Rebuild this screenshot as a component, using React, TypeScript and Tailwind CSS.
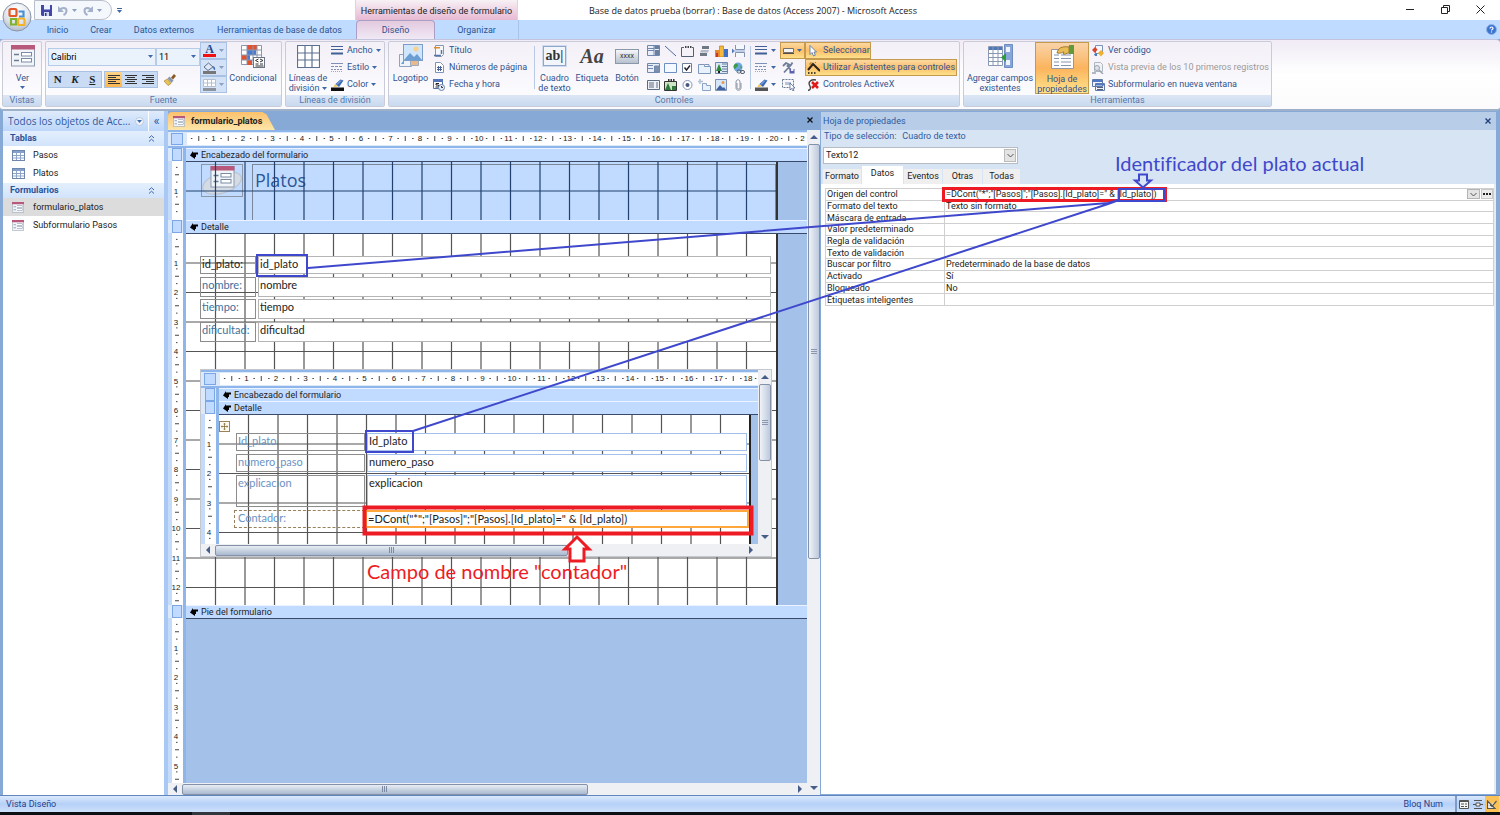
import type { ReactNode } from "react"
import clsx from "clsx"

const PITCH = 29.5

type Kids = { children?: ReactNode }

const Icon = ({ w = 14, h = 14, box, children }: Kids & { w?: number; h?: number; box?: string }) => (
	<svg width={w} height={h} viewBox={box ?? `0 0 ${w} ${h}`} className="shrink-0" aria-hidden="true">
		{children}
	</svg>
)

const Caret = ({ light }: { light?: boolean }) => (
	<svg width="5" height="3" viewBox="0 0 5 3" className="shrink-0" aria-hidden="true">
		<path d="M0 0h5L2.5 3z" fill={light ? "#8aa0c0" : "#3f68a8"} />
	</svg>
)

/* ---------- icons ---------- */

const FormIcon = ({ w, h }: { w: number; h: number }) => (
	<Icon w={w} h={h} box="0 0 24 22">
		<rect x=".5" y=".5" width="23" height="20.5" fill="#f1f4f8" stroke="#8d9bae" />
		<rect x="0" y="0" width="24" height="4.5" fill="#b8587a" />
		<path d="M3 9.500h5M3 15.500h5" stroke="#6c7c92" strokeWidth="1.300" />
		<rect x="10.5" y="7.5" width="10" height="3.5" fill="#fff" stroke="#7b8ba3" />
		<rect x="10.5" y="13.5" width="10" height="3.5" fill="#fff" stroke="#7b8ba3" />
	</Icon>
)

const TableIcon = () => (
	<Icon w={13} h={11}>
		<rect x=".5" y=".5" width="12" height="10" fill="#fff" stroke="#6f87ad" />
		<path d="M1 1h11v2H1z" fill="#7fa0d4" />
		<path d="M1 5.500h11M1 8h11M4.500 1v9M8.500 1v9" stroke="#8fa5c8" />
	</Icon>
)

const OfficeButton = () => (
	<button className="absolute left-[2px] top-[2px] z-10 size-[30px] rounded-full" aria-label="Botón de Office">
		<svg width="30" height="30" viewBox="0 0 30 30" aria-hidden="true">
			<defs>
				<radialGradient id="orb" cx=".5" cy=".25" r=".8">
					<stop offset="0" stopColor="#ffffff" />
					<stop offset=".6" stopColor="#dfe3ea" />
					<stop offset="1" stopColor="#a9b3c4" />
				</radialGradient>
			</defs>
			<circle cx="15" cy="15" r="14" fill="url(#orb)" stroke="#8a95a9" />
			<g fill="none" strokeWidth="2.200">
				<rect x="7.5" y="7" width="7" height="7" rx="1.5" stroke="#e2592a" />
				<path d="M16.500 9.500h5v5H17" stroke="#4a8fd6" />
				<path d="M9 17h5v5.500H9z" stroke="#7fb32f" />
				<rect x="16" y="16.5" width="6.5" height="6.5" rx="1.5" stroke="#f2b229" />
			</g>
		</svg>
	</button>
)

const SaveIcon = () => (
	<Icon w={11} h={11}>
		<path d="M0 0h11v11H1L0 10z" fill="#4146a8" />
		<path d="M3 0h6v4.500H3z" fill="#eef2ff" />
		<path d="M3 7h5v4H3z" fill="#cfd6ee" />
		<path d="M4 8h1.500v3H4z" fill="#33378c" />
	</Icon>
)

const UndoIcon = ({ flip }: { flip?: boolean }) => (
	<Icon w={10} h={11}>
		<g transform={flip ? "matrix(-1 0 0 1 10 0)" : undefined}>
			<path d="M2 5.500c1-3.500 6.500-3.500 6.500 0 0 2-1 3.500-3 4.500" fill="none" stroke="#a3b1ca" strokeWidth="2" />
			<path d="M0 1v6h6z" fill="#a3b1ca" />
		</g>
	</Icon>
)

const LineWeights = () => (
	<Icon w={12} h={9}>
		<path d="M0 .5h12M0 3.500h12" stroke="#3f5f95" />
		<path d="M0 7.500h12" stroke="#3f5f95" strokeWidth="2" />
	</Icon>
)

const LineStyles = () => (
	<Icon w={12} h={9}>
		<path d="M0 .5h12" stroke="#7d92b6" />
		<path d="M0 3.500h12" stroke="#7d92b6" strokeDasharray="3 1" />
		<path d="M0 6.500h12" stroke="#7d92b6" strokeDasharray="2 1" />
		<path d="M0 8.500h12" stroke="#9badc9" strokeDasharray="1 1" />
	</Icon>
)

const PenColor = ({ color = "#111" }: { color?: string }) => (
	<Icon w={13} h={12}>
		<path d="M0 8.500h13V12H0z" fill={color} />
		<path d="M2.500 8 4 5l3 2.500z" fill="#f0c54a" />
		<path d="m4.500 5 5-4.500 3 1-4.500 6.500z" fill="#3b69b5" />
		<path d="m6 5.500 4-4" stroke="#a8c6f0" />
	</Icon>
)

const GridBig = () => (
	<Icon w={23} h={23}>
		<path d="M.5 .5h22v22H.5zM.5 8h22M.5 15h22M8 .5v22M15 .5v22" fill="#fff" stroke="#5c7091" strokeWidth="1.200" />
	</Icon>
)

const ConditionalIcon = () => (
	<Icon w={24} h={23}>
		<path d="M.5 .5h20v19H.5z" fill="#fff" stroke="#8a97ad" />
		<path d="M6 0h6v5H6zM6 15h5v5H6zM12 0h4v5h-4zM1 10h5v5H1z" fill="#e2522e" />
		<path d="M6 5h9v5H6zM6 10h3v5H6z" fill="#4a7bd0" />
		<path d="M.5 5h20M.5 10h20M.5 15h20M6 .5v19M12 .5v19M16 .5v19" stroke="#8a97ad" />
		<rect x="12.5" y="12.5" width="11" height="10" fill="#fff" stroke="#6a7688" />
		<path d="m17.500 14-3 1.500 3 1.500M14.500 19h3M19 14l3 1.500-3 1.500M19 19h3M14.500 21h8" fill="none" stroke="#333" />
	</Icon>
)

const BrushIcon = () => (
	<Icon w={13} h={12}>
		<path d="m1 7 4 4.500 3-2L4.500 5z" fill="#e9c25a" stroke="#a07c25" strokeWidth=".6" />
		<path d="m4.500 4.500 2-2 4 4-2 2.500z" fill="#8b96a8" />
		<path d="m8 3.500 3-3.500 2 2-3 3.500z" fill="#8a5a24" />
	</Icon>
)

const FillIcon = () => (
	<Icon w={13} h={12}>
		<path d="M0 9h13v3H0z" fill="#777" />
		<path d="m1 5 4.500-4L10 5 5 8.500z" fill="#dfe8f5" stroke="#5c7091" />
		<path d="M10 4c2 1 2.500 2.500 2 4-1.500 0-2-2-2-4z" fill="#3b69b5" />
	</Icon>
)

const BordersIcon = () => (
	<Icon w={13} h={12}>
		<path d="M.5 .5h12v7H.5zM.5 4h12M4.500 .5v7M8.500 .5v7" fill="#fff" stroke="#b4c0d2" />
		<path d="M0 9h13v3H0z" fill="#8d949e" />
	</Icon>
)

const LogoIcon = () => (
	<Icon w={24} h={24}>
		<path d="M.5 10.500h12v12H.5z" fill="#eef3fa" stroke="#8fa3c0" />
		<path d="M2 20h3v-4z" fill="#6b9fd4" />
		<path d="M11.500 16.500h8v5h-8z" fill="#e7b98b" stroke="#9daac0" />
		<rect x="4.500" y=".5" width="19" height="16" fill="#cfe5fb" stroke="#7d9cc6" />
		<circle cx="17" cy="5" r="2.500" fill="#fbd08a" />
		<path d="m5 16 6-7 4 4 3-3 5 6z" fill="#6b9fd4" />
	</Icon>
)

const TitleIcon = () => (
	<Icon w={10} h={12}>
		<path d="M1.500 .5h8v9l-2 2h-6z" fill="#f5f8fc" stroke="#8898b2" />
		<path d="M0 2h6v1.500H0z" fill="#e08a2b" />
		<path d="M0 10.500h7M7.500 9V5" stroke="#5874a4" strokeWidth="1.500" />
	</Icon>
)

const PageNumIcon = () => (
	<Icon w={9} h={11}>
		<path d="M.5 .5h5l3 3v7h-8z" fill="#fff" stroke="#7d92b6" />
		<path d="M2 5.500h5M2 7.500h5M3.500 4v5M5.500 4v5" stroke="#4a6496" />
	</Icon>
)

const DateIcon = () => (
	<Icon w={12} h={12}>
		<path d="M.5 1.500h9v8h-9z" fill="#fff" stroke="#5470a0" />
		<path d="M0 0h10v3H0z" fill="#5276b8" />
		<path d="M6 4.500H3v1.500h2.500v2H2.500" fill="none" stroke="#222" />
		<circle cx="8.500" cy="8.500" r="3" fill="#e6eefb" stroke="#6b83ad" />
		<path d="M8.500 7v1.500H10" fill="none" stroke="#333" />
	</Icon>
)

const TextBoxIcon = () => (
	<div className="flex h-5 w-[23px] items-center justify-center border border-[#8fa6c8] bg-[#f2f6fc] font-[family-name:'Liberation_Serif',serif] text-[14px] font-bold leading-none text-[#333] outline outline-1 outline-[#cfdcee]">
		ab|
	</div>
)

const LabelIcon = () => (
	<div className="flex h-5 items-center font-[family-name:'Liberation_Serif',serif] text-[20px] font-bold italic leading-none text-[#444]">
		Aa
	</div>
)

const ButtonIcon = () => (
	<div className="flex h-[15px] w-6 items-center justify-center border border-[#8c98aa] bg-linear-to-b from-[#f4f6f9] to-[#b7c1cf] text-[7px] leading-none text-[#333]">
		xxxx
	</div>
)

const toolIcons: { name: string; art: ReactNode }[] = [
	{
		name: "Cuadro combinado",
		art: (
			<>
				<path d="M.5 .5h12v10H.5z" fill="#e8effa" stroke="#7088ae" />
				<path d="M7 1v10M1 3.500h6M1 5.500h6" stroke="#7088ae" />
				<path d="M7.500 1h5v3h-5zM8 5h4v5H8z" fill="#6a7f9f" />
			</>
		),
	},
	{ name: "Línea", art: <path d="m1 1 11 10" stroke="#4a6aa5" /> },
	{
		name: "Grupo de opciones",
		art: (
			<>
				<path d="M3 2.500H.5v9h12v-9H11" fill="none" stroke="#555f70" />
				<path d="M4 1h1.500v2H4zM6.500 1H8v2H6.500zM9 1h1.500v2H9z" fill="#444" />
			</>
		),
	},
	{
		name: "Botón de alternar",
		art: (
			<>
				<path d="M4 1h7v3H4zM2 8h7v3H2z" fill="#6f7885" />
				<path d="M2 7.500h8L11 5H3z" fill="#b4bbc6" />
			</>
		),
	},
	{
		name: "Gráfico",
		art: (
			<>
				<path d="M0 5h4v7H0z" fill="#e8862b" />
				<path d="M4.500 1h4v11h-4z" fill="#f4b93c" stroke="#b06c17" strokeWidth=".6" />
				<path d="M9 4h4v8H9z" fill="#3f6fc5" />
				<path d="M1 8h2v4H1z" fill="#c8372b" />
			</>
		),
	},
	{
		name: "Insertar salto de página",
		art: (
			<>
				<path d="M3.500 0v4.500h9V0M3.500 12V7.500h9V12" fill="#f4f7fb" stroke="#8193b0" />
				<path d="M0 4v4l2.500-2zM3 6h10" fill="#4f79bd" stroke="#4f79bd" strokeWidth=".6" />
			</>
		),
	},
	{
		name: "Cuadro de lista",
		art: (
			<>
				<path d="M.5 1.500h12v9H.5z" fill="#e8effa" stroke="#7088ae" />
				<path d="M7.500 4h5v6h-5zM1 3.500h5M1 6.500h5" fill="#7d90ad" stroke="#7088ae" />
			</>
		),
	},
	{ name: "Rectángulo", art: <path d="M.5 1.500h12v9H.5z" fill="#f3f9ff" stroke="#6c8fc4" /> },
	{
		name: "Casilla",
		art: (
			<>
				<path d="M1.500 1.500h9v9h-9z" fill="#fff" stroke="#6d7e99" />
				<path d="m3.500 5.500 2 2.500L9 3.500" fill="none" stroke="#223" strokeWidth="1.400" />
			</>
		),
	},
	{ name: "Control de pestaña", art: <path d="M.5 2.500h6v2h6v7H.5zM7 2.500h4v2" fill="#e9f1fb" stroke="#7f97bd" /> },
	{
		name: "Subformulario",
		art: (
			<>
				<path d="M.5 .5h12v11H.5z" fill="#dce8f7" stroke="#7088ae" />
				<path d="M7 2h5M7 4.500h5M7 7h5M7 9.500h5" stroke="#6a7f9f" />
				<path d="m1 9 3-7 3 7z" fill="#2f8a3c" />
				<path d="M3 9h2v2H3z" fill="#1d1d1d" />
			</>
		),
	},
	{
		name: "Hipervínculo",
		art: (
			<>
				<circle cx="6" cy="5" r="4.500" fill="#6da7df" />
				<path d="M3 2c3-1 4 2 2 3S3 8 2 6 2 3 3 2zM8 4l2 1-1 2z" fill="#3d9a45" />
				<rect x="5" y="8" width="4" height="3" rx="1.500" fill="none" stroke="#555f70" />
				<rect x="8.500" y="8.500" width="4" height="3" rx="1.500" fill="none" stroke="#555f70" />
			</>
		),
	},
	{
		name: "Lista",
		art: (
			<>
				<path d="M.5 1.500h12v9H.5z" fill="#eef1f6" stroke="#5d6b82" />
				<path d="M2 4h5M2 6h5M2 8h5M10 3v6" stroke="#5d6b82" />
			</>
		),
	},
	{
		name: "Marco de objeto",
		art: (
			<>
				<path d="M.5 2.500h12v9H.5z" fill="#cde5c5" stroke="#333" />
				<path d="m1 11 3-7 3 7zM8 7h4v4H8z" fill="#2f7a3c" />
				<path d="M4 0h1.500v2H4zM6.500 0H8v2H6.500zM9 0h1.500v2H9z" fill="#333" />
			</>
		),
	},
	{
		name: "Botón de opción",
		art: (
			<>
				<circle cx="6.500" cy="6" r="4.500" fill="#fff" stroke="#8495b2" />
				<circle cx="6.500" cy="6" r="2" fill="#46587a" />
			</>
		),
	},
	{
		name: "Página",
		art: (
			<>
				<path d="M4.500 4.500h4v2h4v5h-8z" fill="#e9f1fb" stroke="#8ca3c8" />
				<path d="M2 0v5M0 2.500h5" stroke="#b3c0d4" strokeWidth="1.500" />
			</>
		),
	},
	{
		name: "Imagen",
		art: (
			<>
				<path d="M.5 .5h11v11H.5z" fill="#d5e6f9" stroke="#7d92b6" />
				<path d="m1 11 4-5 3 3 1-1 2 3z" fill="#3e62a0" />
				<circle cx="8" cy="3.500" r="1.500" fill="#e79a53" />
			</>
		),
	},
	{
		name: "Datos adjuntos",
		art: <path d="M5 4v4.500c0 2 3 2 3 0V3c0-3-4-3-4 0v6c0 3 5 3 5 0V4" fill="none" stroke="#7f8a99" strokeWidth=".9" />,
	},
]

const SpecialIcon = () => (
	<Icon w={11} h={6}>
		<path d="M.5 .5h10v4H.5z" fill="#f4f4f4" stroke="#77716a" />
		<path d="M0 5.500h11" stroke="#57504a" />
	</Icon>
)

const ToolsIcon = () => (
	<Icon w={13} h={12}>
		<path d="M1 4 4 1l3 1.500L5.500 4 11 10M10.500 .5 9 3 2 10.500" fill="none" stroke="#6f7e99" strokeWidth="1.800" />
		<path d="M7.500 7h5v4.500h-5z" fill="#5a62ab" />
		<path d="M9 7h2.500v2H9z" fill="#eef" />
	</Icon>
)

const MarqueeIcon = () => (
	<Icon w={13} h={12}>
		<path d="M.5 .5h11v8H.5z" fill="none" stroke="#6b7a93" strokeDasharray="2 1" />
		<path d="M3 3h6v3H3z" fill="#b9c4d6" />
		<path d="M8 4v7l1.500-1.500L11 12l1-.5-1.200-2.500H13z" fill="#fff" stroke="#3f5788" strokeWidth=".7" />
	</Icon>
)

const CursorIcon = () => (
	<Icon w={10} h={12}>
		<path d="M2 .5v9L4 7.500 5.500 11l1.800-.8L6 7h2.500z" fill="#fff" stroke="#4c6c9f" strokeWidth=".8" />
	</Icon>
)

const WandIcon = () => (
	<Icon w={13} h={12}>
		<path d="M1 8 6 2l7 7" fill="none" stroke="#2c2419" strokeWidth="2" />
		<path d="M4 0v2M2 2h2M8 1l1-1" stroke="#b87412" />
		<path d="M1 11h1.500M4 11h1.500M7 11h1.500" stroke="#111" strokeWidth="1.500" />
	</Icon>
)

const ActiveXIcon = () => (
	<Icon w={13} h={12}>
		<path d="M9 1C4 0 1 3 2.500 6S4 11 1 11.500" fill="none" stroke="#444" strokeWidth="1.400" />
		<path d="m5 3 6 6M11 3 5 9" stroke="#e01919" strokeWidth="2.500" />
	</Icon>
)

const AddFieldsIcon = () => (
	<Icon w={25} h={24}>
		<path d="M.5 2.500h14v19H.5z" fill="#fff" stroke="#8a99b3" />
		<path d="M1 3h13v3H1z" fill="#4f78b8" />
		<path d="M.5 9.500h14M.5 13.500h14M.5 17.500h14M5 3v18M10 3v18" stroke="#8a99b3" />
		<path d="M16.500 .5h8v23h-8z" fill="#86a6dc" stroke="#6f8cbe" />
		<path d="M18 3h4v5h-4zM18 16h4v5h-4z" fill="#f1f5fb" />
		<path d="M13 13.500 18 9v9z" fill="#2f9a3a" />
	</Icon>
)

const PropertyIcon = () => (
	<Icon w={25} h={24}>
		<path d="M1.500 4.500h22v19h-22z" fill="#fdfdfd" stroke="#9098a5" />
		<path d="M4 10h5M4 13.500h5M4 17h5M4 20.500h5M11 10h10M11 13.500h10M11 17h10M11 20.500h10" stroke="#8796ad" />
		<path d="M7 8c1-5 5-7 12-6v6c-3 0-4 2-6 1l1-2c-2 0-3 2-7 1z" fill="#e8bd55" stroke="#8c6420" strokeWidth=".8" />
		<path d="M19 0h5v9h-5z" fill="#5f9a3c" />
	</Icon>
)

const CodeIcon = () => (
	<Icon w={12} h={12}>
		<path d="M3.500 .5h7v8h-7z" fill="#f5f7fb" stroke="#7d92b6" />
		<path d="m0 5 3-3 2.500 2.500L3 8z" fill="#d8442c" />
		<path d="m6 8 3-3 3 3-3 3.500z" fill="#eeb02e" />
		<path d="m2 9 3-1v3H3z" fill="#4a78c8" />
	</Icon>
)

const PreviewIcon = () => (
	<Icon w={12} h={12}>
		<path d="M2.500 .5h6l2 2v7h-8z" fill="#f0f2f5" stroke="#b0b6c0" />
		<circle cx="5" cy="6" r="2.500" fill="#dfe3e9" stroke="#9aa3b0" />
		<path d="m7 8 4 4M0 11h4" stroke="#9aa3b0" strokeWidth="1.500" />
	</Icon>
)

const SubformIcon = () => (
	<Icon w={13} h={12}>
		<path d="M.5 .5h10v7H.5zM3.500 4.500h9v7h-9z" fill="#eef3fb" stroke="#5f7aa8" />
		<path d="M1 1h9v2H1zM4 5h8v1.500H4z" fill="#4f78c4" />
		<path d="M5 8.500h6M5 10.500h6" stroke="#54617a" />
	</Icon>
)

/* ---------- ribbon ---------- */

const Group = ({ label, className, children }: Kids & { label: string; className: string }) => (
	<div
		role="group"
		aria-label={label}
		className={clsx(
			"flex h-[66px] shrink-0 flex-col overflow-hidden rounded-xs border border-[#c9ccd8] bg-linear-to-b from-[#f3f0f7] to-[#fdfdff]",
			className,
		)}
	>
		<div className="flex h-[53px] items-start pl-px">{children}</div>
		<div className="flex-1 bg-linear-to-b from-[#dce7f5] to-[#c9d9ef] text-center leading-[11px] text-[#5577a9]">{label}</div>
	</div>
)

const BigButton = ({ icon, className, children }: Kids & { icon: ReactNode; className: string }) => (
	<button className={clsx("flex h-[52px] shrink-0 flex-col items-center pt-[2px] leading-[10px]", className)}>
		<span className="mb-[5px] flex h-6 items-center">{icon}</span>
		{children}
	</button>
)

const SmallButton = ({ icon, className, children }: Kids & { icon: ReactNode; className?: string }) => (
	<button className={clsx("flex h-[17px] items-center gap-[3px] whitespace-nowrap text-left", className)}>
		<span className="flex w-[14px] justify-center">{icon}</span>
		{children}
	</button>
)

const Rule = () => <span className="mt-[4px] h-[43px] w-px shrink-0 bg-[#b7cbe6]" />

const Toggle = ({ label, on, children }: Kids & { label: string; on?: boolean }) => (
	<button
		aria-label={label}
		aria-pressed={on}
		className={clsx(
			"flex h-full flex-1 items-center justify-center",
			on ? "bg-linear-to-b from-[#fbd48b] to-[#fdb64e]" : "bg-[#c9dcf3]",
		)}
	>
		{children}
	</button>
)

const AlignIcon = ({ d }: { d: string }) => (
	<Icon w={12} h={10}>
		<path d={d} stroke="#333" />
	</Icon>
)

const hot = "border border-[#c59a4e] bg-linear-to-b from-[#fcd9a0] via-[#fbbf6a] to-[#fde08a]"

const Ribbon = () => (
	<div className="flex h-[72px] gap-[3px] overflow-hidden rounded-sm border-b-2 border-t border-b-[#9fb0c9] border-t-[#c3c3dc] bg-linear-to-b from-[#f0ebf5] via-white to-[#fbfbfd] pl-[2px] pt-px text-[#32548f]">
		<Group label="Vistas" className="w-[40px]">
			<BigButton className="w-[37px]" icon={<FormIcon w={24} h={22} />}>
				<span>Ver</span>
				<span className="mt-[3px]">
					<Caret />
				</span>
			</BigButton>
		</Group>

		<Group label="Fuente" className="w-[237px]">
			<div className="w-[153px] shrink-0 pl-px pt-[6px]">
				<div className="flex h-[18px]">
					<span className="relative flex w-[108px]">
						<select aria-label="Fuente" className="w-full appearance-none border border-[#b5cbe8] bg-[#eaf2fc] px-[2px] text-black">
							<option>Calibri</option>
						</select>
						<span className="pointer-events-none absolute right-[3px] top-[7px]">
							<Caret />
						</span>
					</span>
					<span className="relative flex w-[44px]">
						<select aria-label="Tamaño" className="w-full appearance-none border border-[#b5cbe8] bg-[#eaf2fc] px-[2px] text-black">
							<option>11</option>
						</select>
						<span className="pointer-events-none absolute right-[4px] top-[7px]">
							<Caret />
						</span>
					</span>
				</div>
				<div className="mt-[5px] flex h-[17px] font-[family-name:'Liberation_Serif',serif] text-[11px] font-bold text-[#222]">
					<div className="flex w-[54px] border border-[#a9c1e2]">
						<Toggle label="Negrita">N</Toggle>
						<Toggle label="Cursiva">
							<i>K</i>
						</Toggle>
						<Toggle label="Subrayado">
							<u>S</u>
						</Toggle>
					</div>
					<div className="ml-[2px] flex w-[54px] border border-[#a9c1e2]">
						<Toggle label="Alinear a la izquierda" on>
							<AlignIcon d="M0 .5h12M0 2.500h8M0 4.500h12M0 6.500h8M0 8.500h12" />
						</Toggle>
						<Toggle label="Centrar">
							<AlignIcon d="M0 .5h12M2 2.500h8M0 4.500h12M2 6.500h8M0 8.500h12" />
						</Toggle>
						<Toggle label="Alinear a la derecha">
							<AlignIcon d="M0 .5h12M4 2.500h8M0 4.500h12M4 6.500h8M0 8.500h12" />
						</Toggle>
					</div>
					<button className="ml-[5px]" aria-label="Copiar formato">
						<BrushIcon />
					</button>
				</div>
			</div>
			<div className="w-[27px] shrink-0">
				{[
					{
						name: "Color de fuente",
						art: (
							<span className="flex w-[13px] flex-col items-center border-b-[3px] border-[#f01010] font-[family-name:'Liberation_Serif',serif] text-[12px] font-bold leading-[10px] text-[#26468c]">
								A
							</span>
						),
					},
					{ name: "Color de relleno", art: <FillIcon /> },
					{ name: "Bordes", art: <BordersIcon /> },
				].map((b) => (
					<button
						key={b.name}
						aria-label={b.name}
						className="flex h-[17px] w-full items-center justify-between border border-[#a9c1e2] bg-[#d3e2f6] px-[2px]"
					>
						{b.art}
						<Caret light />
					</button>
				))}
			</div>
			<BigButton className="w-[52px]" icon={<ConditionalIcon />}>
				Condicional
			</BigButton>
		</Group>

		<Group label="Líneas de división" className="w-[100px]">
			<BigButton className="w-[42px]" icon={<GridBig />}>
				<span>Líneas de</span>
				<span className="flex items-center gap-[3px]">
					división <Caret />
				</span>
			</BigButton>
			<div className="pl-px">
				<SmallButton icon={<LineWeights />}>
					Ancho <Caret />
				</SmallButton>
				<SmallButton icon={<LineStyles />}>
					Estilo <Caret />
				</SmallButton>
				<SmallButton icon={<PenColor />}>
					Color <Caret />
				</SmallButton>
			</div>
		</Group>

		<Group label="Controles" className="w-[572px]">
			<BigButton className="w-[41px]" icon={<LogoIcon />}>
				Logotipo
			</BigButton>
			<div className="w-[103px] shrink-0 pl-px">
				<SmallButton icon={<TitleIcon />}>Título</SmallButton>
				<SmallButton icon={<PageNumIcon />}>Números de página</SmallButton>
				<SmallButton icon={<DateIcon />}>Fecha y hora</SmallButton>
			</div>
			<Rule />
			<BigButton className="w-[39px]" icon={<TextBoxIcon />}>
				<span>Cuadro</span>
				<span>de texto</span>
			</BigButton>
			<BigButton className="w-[36px]" icon={<LabelIcon />}>
				Etiqueta
			</BigButton>
			<BigButton className="w-[34px]" icon={<ButtonIcon />}>
				Botón
			</BigButton>
			<div className="grid w-[106px] shrink-0 grid-cols-6 pl-px pr-[3px]">
				{toolIcons.map((t) => (
					<button key={t.name} aria-label={t.name} className="flex h-[17px] items-center justify-center">
						<Icon w={13} h={12}>
							{t.art}
						</Icon>
					</button>
				))}
			</div>
			<Rule />
			<div className="w-[29px] shrink-0 pl-[3px]">
				<SmallButton icon={<LineWeights />}>
					<Caret />
				</SmallButton>
				<SmallButton icon={<LineStyles />}>
					<Caret />
				</SmallButton>
				<SmallButton icon={<PenColor color="#555" />}>
					<Caret />
				</SmallButton>
			</div>
			<div className="flex w-[25px] shrink-0 flex-col">
				<button aria-label="Efecto especial" className={clsx("flex h-[17px] items-center justify-between px-[2px]", hot)}>
					<SpecialIcon />
					<Caret />
				</button>
				<button aria-label="Predeterminados" className="flex h-[17px] items-center pl-[2px]">
					<ToolsIcon />
				</button>
				<button aria-label="Seleccionar todo" className="flex h-[17px] items-center pl-[2px]">
					<MarqueeIcon />
				</button>
			</div>
			<div className="flex shrink-0 flex-col items-start">
				<SmallButton icon={<CursorIcon />} className={clsx("w-[66px]", hot)}>
					Seleccionar
				</SmallButton>
				<SmallButton icon={<WandIcon />} className={clsx("w-[152px]", hot)}>
					Utilizar Asistentes para controles
				</SmallButton>
				<SmallButton icon={<ActiveXIcon />} className="pl-px">
					Controles ActiveX
				</SmallButton>
			</div>
		</Group>

		<Group label="Herramientas" className="w-[309px]">
			<BigButton className="w-[70px]" icon={<AddFieldsIcon />}>
				<span>Agregar campos</span>
				<span>existentes</span>
			</BigButton>
			<BigButton
				className="w-[54px] border border-[#c59a4e] bg-linear-to-b from-[#f9d3a6] via-[#fbb45c] to-[#ffe38c]"
				icon={<PropertyIcon />}
			>
				<span>Hoja de</span>
				<span>propiedades</span>
			</BigButton>
			<div className="pl-[2px]">
				<SmallButton icon={<CodeIcon />}>Ver código</SmallButton>
				<SmallButton icon={<PreviewIcon />} className="text-[#9a9a9a]">
					Vista previa de los 10 primeros registros
				</SmallButton>
				<SmallButton icon={<SubformIcon />}>Subformulario en nueva ventana</SmallButton>
			</div>
		</Group>
	</div>
)

const TitleBar = () => (
	<header className="flex h-5 bg-white">
		<div className="ml-[34px] flex w-[78px] items-center gap-[6px] rounded-r-full border border-[#b9bfca] bg-[#f4f7fb] pl-[6px]">
			<button aria-label="Guardar">
				<SaveIcon />
			</button>
			<button aria-label="Deshacer" className="flex items-center gap-[4px]">
				<UndoIcon /> <Caret light />
			</button>
			<button aria-label="Rehacer" className="flex items-center gap-[4px]">
				<UndoIcon flip /> <Caret light />
			</button>
		</div>
		<button aria-label="Personalizar" className="ml-[5px] flex flex-col items-center justify-center gap-px">
			<span className="h-px w-[5px] bg-[#3f5f95]" />
			<Caret />
		</button>
		<div className="ml-[233px] w-[163px] border-x border-[#e6cfdf] bg-linear-to-b from-[#f7f1f5] to-[#e7b9d3] text-center leading-[22px]">
			Herramientas de diseño de formulario
		</div>
		<h1 className="flex-1 pl-[71px] font-[family-name:'Open_Sans','Noto_Sans',sans-serif] leading-[22px]">
			Base de datos prueba (borrar) : Base de datos (Access 2007) - Microsoft Access
		</h1>
		<div className="flex w-[108px] items-center justify-between pb-px pl-[14px] pr-[15px]">
			<button aria-label="Minimizar">
				<Icon w={8} h={9}>
					<path d="M0 4.500h8" stroke="#222" />
				</Icon>
			</button>
			<button aria-label="Restaurar">
				<Icon w={9} h={9}>
					<path d="M.5 2.500h6v6h-6zM2.500 2.500v-2h6v6h-2" fill="none" stroke="#222" />
				</Icon>
			</button>
			<button aria-label="Cerrar">
				<Icon w={9} h={9}>
					<path d="m.5 .5 8 8M8.500 .5l-8 8" stroke="#222" />
				</Icon>
			</button>
		</div>
	</header>
)

const Tabs = () => (
	<nav className="flex h-[19px] bg-[#bfdbff] pl-9 leading-[21px] text-[#2f538f]">
		<button className="w-[43px]">Inicio</button>
		<button className="w-[44px]">Crear</button>
		<button className="w-[82px]">Datos externos</button>
		<button className="w-[149px]">Herramientas de base de datos</button>
		<div className="ml-[2px] flex w-[163px] border-r border-[#a9c3e8]">
			<button className="w-[79px] rounded-t-sm border border-b-0 border-[#a99fc6] bg-linear-to-b from-[#e3c9de] to-[#f0e9f5] leading-[19px]">
				Diseño
			</button>
			<button className="flex-1">Organizar</button>
		</div>
		<button aria-label="Ayuda" className="ml-auto mr-[3px]">
			<svg width="11" height="11" viewBox="0 0 11 11" aria-hidden="true">
				<circle cx="5.500" cy="5.500" r="5" fill="#3c73cf" stroke="#8fb3ea" />
				<path d="M4 4.500c0-2 3-2 3 0 0 1-1.500 1-1.500 2M5.500 7.500v1" fill="none" stroke="#fff" strokeWidth="1.200" />
			</svg>
		</button>
	</nav>
)

/* ---------- navigation pane ---------- */

const NavGroup = ({ title, children }: Kids & { title: string }) => (
	<>
		<button className="flex h-[15px] w-full items-center justify-between border-b border-[#d3e4fa] bg-linear-to-b from-[#e4effd] to-[#d3e5fc] pl-[7px] pr-[10px] font-bold text-[#2b5397]">
			{title}
			<Icon w={5} h={7}>
				<path d="M0 3 2.500 .7 5 3M0 6.500l2.500-2.300L5 6.500" fill="none" stroke="#3f68a8" />
			</Icon>
		</button>
		<ul className="pb-px">{children}</ul>
	</>
)

const NavItem = ({ icon, active, children }: Kids & { icon: ReactNode; active?: boolean }) => (
	<li className={clsx("flex h-[18px] items-center gap-[8px] pl-[9px]", active && "bg-[#dcdcdc]")}>
		<span className="flex w-[13px]">{icon}</span>
		<a href="#" className="text-[#222]">
			{children}
		</a>
	</li>
)

const NavPane = () => (
	<aside className="flex w-[165px] shrink-0 flex-col border-r-4 border-[#a9c8f3] bg-white">
		<div className="flex h-5 items-center bg-linear-to-b from-[#dfebfb] to-[#bcd6fa] pl-[5px] text-[10px] text-[#33589c]">
			<h2 className="w-[127px] font-[family-name:'Open_Sans','Noto_Sans',sans-serif]">Todos los objetos de Acc...</h2>
			<button aria-label="Filtro" className="flex size-[9px] items-center justify-center rounded-full border border-[#b9c9e0] bg-[#eef3fa]">
				<Caret />
			</button>
			<button aria-label="Contraer" className="ml-[4px] h-full flex-1 border-l border-white pb-px text-[13px] leading-none">
				«
			</button>
		</div>
		<NavGroup title="Tablas">
			<NavItem icon={<TableIcon />}>Pasos</NavItem>
			<NavItem icon={<TableIcon />}>Platos</NavItem>
		</NavGroup>
		<NavGroup title="Formularios">
			<NavItem icon={<FormIcon w={12} h={11} />} active>
				formulario_platos
			</NavItem>
			<NavItem icon={<FormIcon w={12} h={11} />}>Subformulario Pasos</NavItem>
		</NavGroup>
	</aside>
)

/* ---------- form designer ---------- */

// quarter marks of a ruler, running on a little past the last number
const quarters = (count: number) => Array.from({ length: count * 4 + 3 }, (_, i) => i + 1)

const digits = "font-[family-name:'Liberation_Sans',sans-serif] text-[8px]"

const HRuler = ({ count, tail }: { count: number; tail?: string }) => (
	<svg width="100%" height="12" className={clsx("block bg-white", digits)} aria-hidden="true">
		{quarters(count).map((q) => {
			const x = (q * PITCH) / 4 - 3
			if (q % 4 === 0)
				return (
					<text key={q} x={x} y="8" textAnchor="middle" fill="#222">
						{q / 4}
					</text>
				)
			return q % 2 === 0 ? (
				<path key={q} d={`M${x} 3v5`} stroke="#444" />
			) : (
				<path key={q} d={`M${x - 0.5} 5.500h1.500`} stroke="#444" />
			)
		})}
		{tail && (
			<text x={(count + 1) * PITCH - 4} y="8" textAnchor="middle" fill="#222">
				{tail}
			</text>
		)}
	</svg>
)

const VRuler = ({ count }: { count: number }) => (
	<div className="w-[18px] shrink-0 overflow-hidden border-r-[3px] border-[#8fb6ea] bg-[#c5dbfa] pl-[4px]">
		<svg width="11" height="100%" className={clsx("block bg-white", digits)} aria-hidden="true">
			{quarters(count).map((q) => {
				const y = (q * PITCH) / 4
				if (q % 4 === 0)
					return (
						<text key={q} x="4" y={y + 3} textAnchor="middle" fill="#222">
							{q / 4}
						</text>
					)
				return q % 2 === 0 ? (
					<path key={q} d={`M3 ${y - 1}h4`} stroke="#444" />
				) : (
					<path key={q} d={`M4 ${y - 1}h1.500`} stroke="#444" />
				)
			})}
		</svg>
	</div>
)

const RulerRow = ({ count, tail }: { count: number; tail?: string }) => (
	<div className="flex h-[18px] border-y-2 border-[#8fb6ea] bg-[#dce9fb] pl-[3px]">
		<span className="mt-px size-3 border border-[#7ba7e6] bg-[#c1daff]" />
		<div className="ml-[4px] flex-1 overflow-hidden pt-px">
			<HRuler count={count} tail={tail} />
		</div>
	</div>
)

const Section = ({ title, count = 0, className, children }: Kids & { title: string; count?: number; className?: string }) => (
	<>
		<div className="flex h-[13px] shrink-0 font-[family-name:Roboto,sans-serif] text-[9px] leading-[11px]">
			<span className="flex w-[18px] border-r-[3px] border-[#8fb6ea] bg-[#dce9fb] pl-[4px]">
				<span className="h-full w-[10px] border border-[#7ba7e6] bg-[#c1daff]" />
			</span>
			<button className="flex flex-1 items-center gap-[3px] border-t border-[#eaf3ff] bg-[#c1daff] pl-[4px] text-[#222]">
				<Icon w={8} h={8}>
					<path d="M3 0v1.500h5v2H6v2.500H5V8L0 4.500z" fill="#000" />
				</Icon>
				{title}
			</button>
		</div>
		{children && (
			<div className={clsx("flex", className)}>
				<VRuler count={count} />
				<div className="relative flex-1 overflow-hidden border-t border-[#3a4a68] bg-[#a3c1e9]">{children}</div>
			</div>
		)}
	</>
)

const Grid = ({ cols, rows, tone }: { cols: number; rows: number; tone: "paper" | "blue" }) => (
	<svg width="100%" height="100%" className="absolute inset-0" aria-hidden="true">
		{Array.from({ length: cols }, (_, i) => (
			<path key={`c${i}`} d={`M${(i + 1) * PITCH} 0v400`} stroke={tone === "blue" ? "#21406f" : "#555"} strokeWidth="1.200" />
		))}
		{Array.from({ length: rows }, (_, i) => (
			<path key={`r${i}`} d={`M0 ${(i + 1) * PITCH - 0.5}h800`} stroke={tone === "blue" ? "#21406f" : "#555"} strokeWidth="1.200" />
		))}
	</svg>
)

const Arrow = ({ d }: { d: string }) => (
	<Icon w={8} h={8}>
		<path d={d} fill="#455d87" />
	</Icon>
)

const VScroll = ({ thumb }: { thumb: string }) => (
	<div className="flex w-[13px] shrink-0 flex-col items-center bg-[#eef0f3]">
		<button aria-label="Subir" className="flex h-[14px] w-full items-center justify-center">
			<Arrow d="M0 6h8L4 2z" />
		</button>
		<div
			className={clsx(
				"flex w-[12px] items-center justify-center rounded-xs border border-[#8591a8] bg-linear-to-r from-[#f0f3f8] to-[#bcc9dc]",
				thumb,
			)}
		>
			<Icon w={6} h={6}>
				<path d="M0 .5h6M0 2.500h6M0 4.500h6" stroke="#8a97ad" />
			</Icon>
		</div>
		<button aria-label="Bajar" className="mt-auto flex h-[14px] w-full items-center justify-center">
			<Arrow d="M0 2h8L4 6z" />
		</button>
	</div>
)

const HScroll = ({ thumb, corner }: { thumb: string; corner?: boolean }) => (
	<div className={clsx("flex h-[12px] shrink-0 items-center bg-[#eef0f3]", corner && "pr-[13px]")}>
		<button aria-label="Izquierda" className="flex w-[14px] items-center justify-center">
			<Arrow d="M6 0v8L2 4z" />
		</button>
		<div
			className={clsx(
				"flex h-[11px] items-center justify-center rounded-xs border border-[#8591a8] bg-linear-to-b from-[#e8edf4] to-[#a9b9cf]",
				thumb,
			)}
		>
			<Icon w={6} h={6}>
				<path d="M.5 0v6M2.500 0v6M4.500 0v6" stroke="#7d8aa2" />
			</Icon>
		</div>
		<button aria-label="Derecha" className="ml-auto flex w-[14px] items-center justify-center">
			<Arrow d="M2 0v8l4-4z" />
		</button>
	</div>
)

type FieldDef = { id: string; label: string; value: string; pos: string; dark?: boolean }

const dishFields: FieldDef[] = [
	{ id: "id_plato", label: "id_plato:", value: "id_plato", pos: "top-[22px] h-[18px]", dark: true },
	{ id: "nombre", label: "nombre:", value: "nombre", pos: "top-[43px] h-[20px]" },
	{ id: "tiempo", label: "tiempo:", value: "tiempo", pos: "top-[65px] h-[20px]" },
	{ id: "dificultad", label: "dificultad:", value: "dificultad", pos: "top-[88px] h-[20px]" },
]

const stepFields: FieldDef[] = [
	{ id: "sub_id_plato", label: "Id_plato", value: "Id_plato", pos: "top-[18px] h-[18px]" },
	{ id: "numero_paso", label: "numero_paso", value: "numero_paso", pos: "top-[39px] h-[18px]" },
	{ id: "explicacion", label: "explicacion", value: "explicacion", pos: "top-[60px] h-[32px]" },
]

const Subform = () => (
	<div className="absolute left-[14px] top-[135px] flex w-[572px] flex-col border border-[#c4c8ce] bg-white">
		<div className="flex">
			<div className="min-w-0 flex-1">
				<RulerRow count={18} />
				<Section title="Encabezado del formulario" />
				<Section title="Detalle" count={4} className="h-[130px]">
					<div className="relative h-full w-[532px] border-r-2 border-[#222] bg-white">
						<Grid cols={17} rows={4} tone="paper" />
						<span className="absolute left-0 top-[6px] flex size-[11px] items-center justify-center border border-[#9c8256] bg-[#fdfaf3]">
							<Icon w={7} h={7}>
								<path d="M3.500 0v7M0 3.500h7M2.500 1h2M2.500 6h2M1 2.500v2M6 2.500v2" stroke="#8a6d3b" strokeWidth=".8" />
							</Icon>
						</span>
						{stepFields.map((f) => (
							<div key={f.id} className={clsx("absolute left-[17px] flex w-[511px] gap-[2px]", f.pos)}>
								<label htmlFor={f.id} className="w-[129px] border border-[#8c8c8c] px-px text-[#6a92c4]">
									{f.label}
								</label>
								<div className="flex flex-1 items-start border border-[#a3c0ea] bg-white">
									<input id={f.id} defaultValue={f.value} className="h-[14px] w-full bg-white px-px text-[#222] outline-none" />
								</div>
							</div>
						))}
						<div className="absolute left-[15px] top-[95px] flex h-[18px] w-[515px]">
							<label htmlFor="contador" className="w-[131px] border border-dashed border-[#96815c] px-[3px] text-[#6a92c4]">
								Contador:
							</label>
							<input
								id="contador"
								defaultValue={'=DCont("*";"[Pasos]";"[Pasos].[Id_plato]=" & [Id_plato])'}
								className="flex-1 border-2 border-[#ffa63c] bg-white px-px text-[#222] outline-none"
							/>
						</div>
					</div>
				</Section>
			</div>
			<VScroll thumb="h-[77px]" />
		</div>
		<HScroll thumb="w-[353px]" corner />
	</div>
)

const Designer = () => (
	<section className="flex w-[652px] shrink-0 flex-col">
		<div className="flex h-[19px] items-end justify-between pr-[7px]">
			<button className="flex h-[18px] w-[107px] items-center gap-[6px] rounded-tl-sm bg-linear-to-b from-[#fcc16b] to-[#fde6a8] pl-[5px] font-bold text-[#222] [clip-path:polygon(0_0,88%_0,92%_12%,100%_100%,0_100%)]">
				<FormIcon w={12} h={11} />
				formulario_platos
			</button>
			<button aria-label="Cerrar formulario" className="mb-[7px]">
				<Icon w={6} h={6}>
					<path d="m.5 .5 5 5M5.500 .5l-5 5" stroke="#111" strokeWidth="1.300" />
				</Icon>
			</button>
		</div>
		<div className="flex flex-1 bg-[#dce9fb]">
			<div className="flex min-w-0 flex-1 flex-col">
				<RulerRow count={20} tail="2" />
				<Section title="Encabezado del formulario" count={1} className="h-[59px]">
					<div className="relative h-full w-[592px] border-r-2 border-[#333] bg-[#c1daff]">
						<div className="absolute left-[15px] top-[2px] flex h-[33px] w-[42px] items-start justify-center border border-[#8b97a9] pt-[2px]">
							<svg width="40" height="29" viewBox="0 0 40 29" aria-hidden="true">
								<ellipse cx="20" cy="16" rx="20" ry="10" transform="rotate(-18 20 16)" fill="#d5dbe4" stroke="#b9c3d1" />
							</svg>
							<span className="absolute left-2 top-px">
								<FormIcon w={25} h={22} />
							</span>
						</div>
						<div className="absolute left-[66px] top-[2px] h-[60px] w-[524px] border border-[#7a8799] px-[2px] font-[family-name:'Open_Sans',sans-serif] text-[18px] leading-[30px] text-[#2b5797]">
							Platos
						</div>
						<Grid cols={19} rows={1} tone="blue" />
					</div>
				</Section>
				<Section title="Detalle" count={12} className="h-[372px]">
					<div className="relative h-full w-[592px] border-r-2 border-[#333] bg-white font-[family-name:Lato,sans-serif] text-[11px] leading-[14px]">
						<Grid cols={19} rows={12} tone="paper" />
						{dishFields.map((f) => (
							<div key={f.id} className={clsx("absolute left-[14px] flex w-[571px] gap-[2px]", f.pos)}>
								<label
									htmlFor={f.id}
									className={clsx("w-[56px] border border-[#8c8c8c] px-px", f.dark ? "text-[#222]" : "text-[#41719c]")}
								>
									{f.label}
								</label>
								<div className="flex flex-1 items-start border border-[#b5b5b5] bg-white">
									<input id={f.id} defaultValue={f.value} className="h-[14px] w-full bg-white px-px text-[#222] outline-none" />
								</div>
							</div>
						))}
						<Subform />
					</div>
				</Section>
				<div className="flex flex-1 flex-col">
					<Section title="Pie del formulario" count={5} className="flex-1">
						<span />
					</Section>
				</div>
				<HScroll thumb="w-[406px]" />
			</div>
			<VScroll thumb="h-[415px]" />
		</div>
	</section>
)

/* ---------- property sheet ---------- */

const props: [string, string][] = [
	["Origen del control", '=DCont("*";"[Pasos]";"[Pasos].[Id_plato]=" & [Id_plato])'],
	["Formato del texto", "Texto sin formato"],
	["Máscara de entrada", ""],
	["Valor predeterminado", ""],
	["Regla de validación", ""],
	["Texto de validación", ""],
	["Buscar por filtro", "Predeterminado de la base de datos"],
	["Activado", "Sí"],
	["Bloqueado", "No"],
	["Etiquetas inteligentes", ""],
]

const ChevronDown = () => (
	<Icon w={7} h={5}>
		<path d="m.5 1 3 3 3-3" fill="none" stroke="#555" />
	</Icon>
)

const propTabs: { name: string; width: string }[] = [
	{ name: "Formato", width: "w-[38px]" },
	{ name: "Datos", width: "w-[41px]" },
	{ name: "Eventos", width: "w-[38px]" },
	{ name: "Otras", width: "w-[39px]" },
	{ name: "Todas", width: "w-[37px]" },
]

const PropertySheet = () => (
	<section className="flex min-w-0 flex-1 flex-col border border-r-4 border-[#86a9d8] bg-[#d6e4f3] text-[#222]">
		<div className="flex h-[18px] items-center justify-between bg-[#b8cde8] pl-[2px] pr-[5px] text-[#2f5aa0]">
			<h2>Hoja de propiedades</h2>
			<button aria-label="Cerrar hoja de propiedades">
				<Icon w={6} h={6}>
					<path d="m.5 .5 5 5M5.500 .5l-5 5" stroke="#1f3f7a" strokeWidth="1.300" />
				</Icon>
			</button>
		</div>
		<p className="flex h-[17px] items-start gap-[6px] pl-[3px] pt-px text-[#2f5aa0]">
			<span>Tipo de selección:</span>
			<span>Cuadro de texto</span>
		</p>
		<div className="relative ml-[2px] flex h-[17px] w-[195px]">
			<select aria-label="Selección" className="w-full appearance-none border border-[#b7bcc4] bg-white px-[2px]">
				<option>Texto12</option>
			</select>
			<span className="pointer-events-none absolute right-[2px] top-[2px] flex h-[13px] w-[12px] items-center justify-center border border-[#bbb] bg-[#e4e4e4]">
				<ChevronDown />
			</span>
		</div>
		<div role="tablist" className="mt-[2px] flex h-[18px] items-end gap-px pl-[2px]">
			{propTabs.map((t) => (
				<button
					key={t.name}
					role="tab"
					aria-selected={t.name === "Datos"}
					className={clsx("text-center", t.width, t.name === "Datos" ? "h-[18px] bg-white pb-[3px]" : "h-[15px] bg-[#efefef]")}
				>
					{t.name}
				</button>
			))}
		</div>
		<div className="flex-1 border-r-2 border-[#e9eaec] bg-white pl-[4px] pt-[4px]">
			<table className="h-[118px] w-full border-collapse leading-[10px]">
				<tbody>
					{props.map(([name, value], i) => (
						<tr key={name}>
							<th scope="row" className="w-[119px] border border-[#cfcfcf] px-px py-0 text-left font-normal">
								{name}
							</th>
							<td className="border border-[#cfcfcf] pl-px py-0">
								<div className="flex items-center">
									<input aria-label={name} defaultValue={value} className="h-[10px] min-w-0 flex-1 outline-none" />
									{i === 0 && (
										<>
											<button aria-label="Abrir lista" className="flex h-[10px] w-[13px] items-center justify-center border border-[#b5b5b5] bg-[#e4e4e4]">
												<ChevronDown />
											</button>
											<button aria-label="Generar" className="ml-px flex h-[10px] w-[12px] items-center justify-center border border-[#c9c9c9] bg-[#ececec]">
												<Icon w={8} h={2}>
													<path d="M0 0h2v2H0zM3 0h2v2H3zM6 0h2v2H6z" fill="#222" />
												</Icon>
											</button>
										</>
									)}
								</div>
							</td>
						</tr>
					))}
				</tbody>
			</table>
		</div>
	</section>
)

/* ---------- hand-drawn notes over the window ---------- */

const Notes = () => (
	<div className="pointer-events-none absolute inset-0 overflow-hidden font-[family-name:Lato,sans-serif] text-[20px] leading-6 [font-variant-ligatures:none]">
		<svg width="100%" height="100%" className="absolute inset-0" fill="none" aria-hidden="true">
			<g stroke="#ed1c24">
				<path d="M943.500 188.500h222v12h-222z" strokeWidth="3" />
				<path d="M364.500 507.500h387v26h-387z" strokeWidth="4" />
				<path d="m577 537 12 12h-5v12h-14v-12h-5z" fill="#fff" strokeWidth="3" />
			</g>
			<g stroke="#3f48cc" strokeWidth="2">
				<path d="M308 268 1108 203 1119 200M413 431 1108 204 1119 200" />
				<path d="M257 255h50v21h-50zM366 431h47v21h-47zM1119 189h45v12h-45z" />
				<path d="M1139 174.500h8v6h4l-8 7-8-7h4z" fill="#d6e4f3" />
			</g>
		</svg>
		<p className="absolute left-[1115px] top-[151px] whitespace-nowrap text-[#3f48cc]">Identificador del plato actual</p>
		<p className="absolute left-[367px] top-[559px] whitespace-nowrap text-[#ed1c24]">Campo de nombre "contador"</p>
	</div>
)

const StatusBar = () => (
	<footer className="flex h-[20px] shrink-0 flex-col">
		<div className="flex h-[17px] items-center border-t border-[#5f86bd] bg-linear-to-b from-[#dbe9fc] via-[#b5d0f7] to-[#cfe1fb] pl-[6px] text-[#27418a]">
			<span>Vista Diseño</span>
			<span className="ml-auto mr-[12px]">Bloq Num</span>
			<div className="mr-px flex h-full border-l-2 border-[#7d9cc9]">
				{["Vista Formulario", "Vista Presentación", "Vista Diseño"].map((v, i) => (
					<button key={v} aria-label={v} className={clsx("flex w-[14px] items-center justify-center", i === 2 && "bg-[#fcc255]")}>
						<Icon w={10} h={9}>
							{i === 0 && <path d="M.5 .5h9v8h-9zM1 1.500h8M2 4h3M6 4h2M2 6.500h3M6 6.500h2" fill="#f5f5f5" stroke="#555" />}
							{i === 1 && <path d="M1 .5h8M1 8.500h8M3 3h4v3H3zM0 4.500h3M7 4.500h3" fill="#f5f5f5" stroke="#555" />}
							{i === 2 && <path d="M.5 1v7.500H8zM3 5l2 1.500L9.500 1" fill="#eee" stroke="#555" strokeWidth="1.200" />}
						</Icon>
					</button>
				))}
			</div>
		</div>
		<div className="flex-1 bg-[#0d0f14]">
			<div className="ml-[192px] h-full w-[38px] bg-[#33363c]" />
		</div>
	</footer>
)

const App = () => (
	<div className="relative flex h-screen min-h-[620px] flex-col overflow-hidden bg-[#86a9d6] font-[family-name:Roboto,sans-serif] text-[9px] leading-[11px] text-[#222]">
		<OfficeButton />
		<TitleBar />
		<Tabs />
		<Ribbon />
		<main className="flex flex-1 pl-[3px]">
			<NavPane />
			<Designer />
			<PropertySheet />
		</main>
		<StatusBar />
		<Notes />
	</div>
)

export default App
